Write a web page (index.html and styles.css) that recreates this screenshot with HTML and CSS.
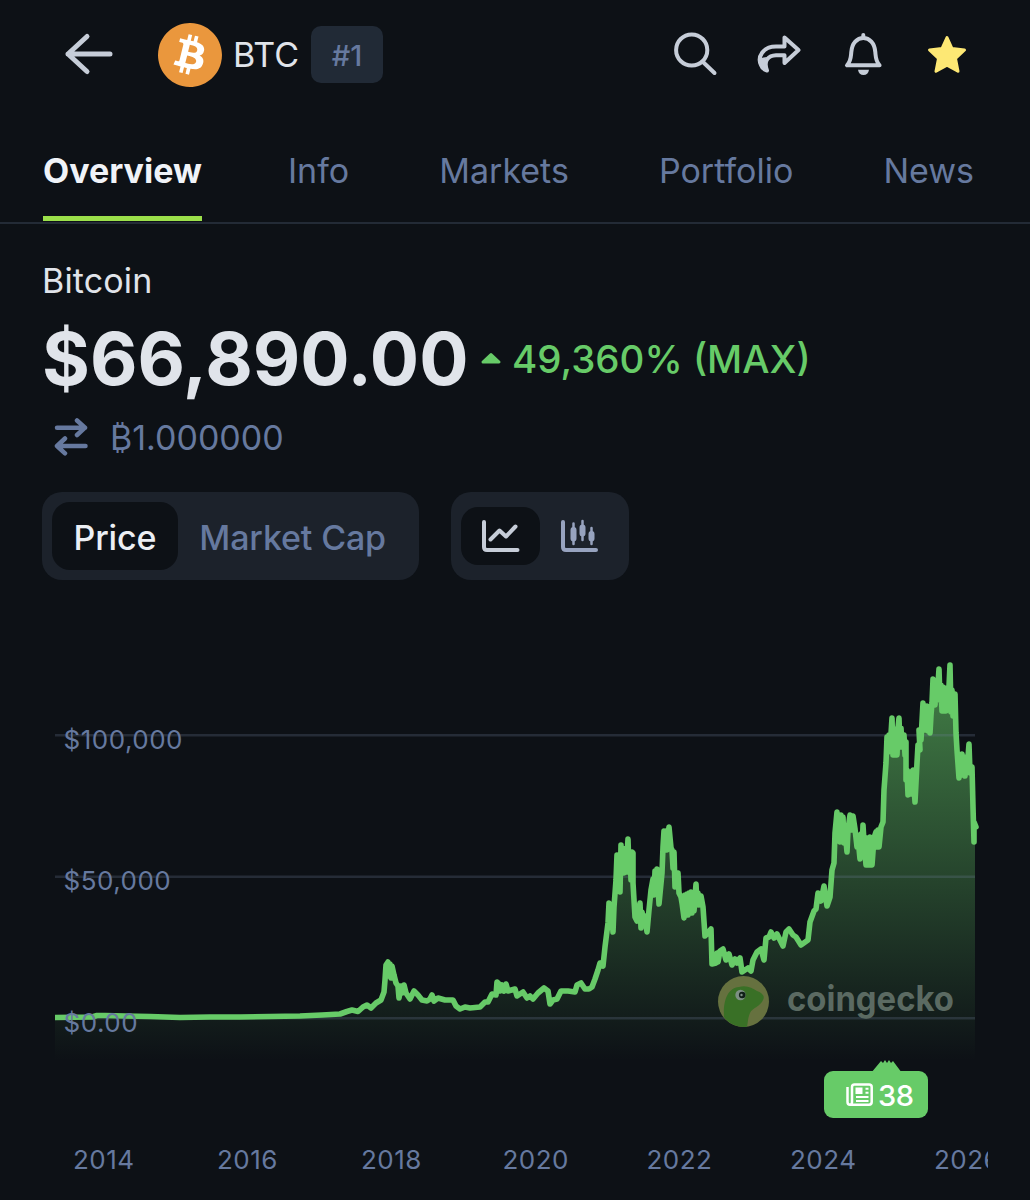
FILE: index.html
```html
<!DOCTYPE html>
<html lang="en">
<head>
	<meta charset="utf-8">
	<title>BTC</title>
	<link rel="stylesheet" href="styles.css">
</head>
<body>
	<header class="header">
		<svg class="back" width="50" height="44" viewBox="64 32 50 44">
			<path d="M110 54H68M87 36.5L68 54L87 71.5"/>
		</svg>
		<svg class="coin" width="64" height="64" viewBox="0 0 24 24">
			<circle cx="12" cy="12" r="11.5" fill="#fff"/>
			<path fill="#ea973d" d="M23.638 14.904c-1.602 6.43-8.113 10.34-14.542 8.736C2.67 22.05-1.244 15.525.362 9.105 1.962 2.67 8.475-1.243 14.9.358c6.43 1.605 10.342 8.115 8.738 14.548v-.002zm-6.35-4.613c.24-1.59-.974-2.45-2.64-3.03l.54-2.153-1.315-.33-.525 2.107c-.345-.087-.705-.167-1.064-.25l.526-2.127-1.32-.33-.54 2.165c-.285-.067-.565-.132-.84-.2l-1.815-.45-.35 1.407s.975.225.955.236c.535.136.63.486.615.766l-1.477 5.92c-.075.166-.24.406-.614.314.015.02-.96-.24-.96-.24l-.66 1.51 1.71.426.93.242-.54 2.19 1.32.327.54-2.17c.36.1.705.19 1.05.273l-.51 2.154 1.32.33.545-2.19c2.24.427 3.93.257 4.64-1.774.57-1.637-.03-2.58-1.217-3.196.854-.193 1.5-.76 1.68-1.93h.01zm-3.01 4.22c-.404 1.64-3.157.75-4.05.53l.72-2.9c.896.23 3.757.67 3.33 2.37zm.41-4.24c-.37 1.49-2.662.735-3.405.55l.654-2.64c.744.18 3.137.524 2.75 2.084v.006z"/>
		</svg>
		<span class="symbol">BTC</span>
		<span class="rank">#1</span>
		<div class="actions">
			<svg width="46" height="46" viewBox="672 31 46 46">
				<circle cx="691.7" cy="50" r="15.6"/>
				<path d="M703 62L714.5 73"/>
			</svg>
			<svg width="46" height="46" viewBox="756 31 46 46">
				<path d="M784.5 46.5H776C763 46.5 757 57 761 65C762 68 765 70 767 70.5C763 60 769 55.5 776 55.2H784.5V63L798.5 50L784.5 37.5Z"/>
				<path class="solid" d="M761 58C759 65 762 70 767 70.5C764 65 764 60 767 57Z"/>
			</svg>
			<svg width="46" height="46" viewBox="840 31 46 46">
				<path d="M863.3 35V38M847 65.3H879.6C875.5 61 875.8 57 875.3 52C874.6 43 869.5 38 863.3 38S852 43 851.3 52C850.8 57 851.1 61 847 65.3Z"/>
				<path class="solid" d="M858 69.7H869C868.5 73 866.5 75 863.5 75S858.5 73 858 69.7Z"/>
			</svg>
			<svg class="star" width="46" height="46" viewBox="924 31 46 46">
				<path d="M947 37.5L952 48.5L964.5 50L955.5 58.5L958 71.3L947 65.3L936 71.3L938.5 58.5L929.5 50L942 48.5Z"/>
			</svg>
		</div>
	</header>

	<nav class="tabs">
		<a class="tab active">Overview</a>
		<a class="tab">Info</a>
		<a class="tab">Markets</a>
		<a class="tab">Portfolio</a>
		<a class="tab">News</a>
	</nav>

	<section class="summary">
		<div class="name">Bitcoin</div>
		<div class="priceRow">
			<span class="price">$66,890.00</span>
			<svg class="up" width="22" height="14" viewBox="0 0 22 14"><path d="M3 11L11 3.5L19 11Z"/></svg>
			<span class="change">49,360% (MAX)</span>
		</div>
		<div class="convert">
			<svg width="36" height="38" viewBox="53 418 36 38">
				<path d="M57 427.7H85M77 420.5L85 427.7L77 435M85.5 446H57M65 438.5L57 446L65 453.3"/>
			</svg>
			<span class="amount">₿1.000000</span>
		</div>
	</section>

	<div class="controls">
		<div class="group">
			<span class="option selected">Price</span>
			<span class="option">Market Cap</span>
		</div>
		<div class="group icons">
			<span class="iconOption selected">
				<svg width="40" height="36" viewBox="481 518 40 36">
					<path d="M484 522V547Q484 550 487 550H517.5M490.5 539.5L499.5 530.5L506 536.5L515.5 526.5"/>
				</svg>
			</span>
			<span class="iconOption">
				<svg width="40" height="36" viewBox="560 518 40 36">
					<path d="M563 522V547Q563 550 566 550H596"/>
					<path class="wick" d="M573.5 523.5V544M582.5 521V540M591.5 528V544"/>
					<path class="candle" d="M573.5 530V538.5M582.5 527.5V533.5M591.5 534V538.5"/>
				</svg>
			</span>
		</div>
	</div>

	<svg class="chart" width="1030" height="600" viewBox="0 600 1030 600">
		<defs>
			<linearGradient id="fade" gradientUnits="userSpaceOnUse" x1="0" y1="664" x2="0" y2="1060">
				<stop offset="0" stop-color="#67cb68" stop-opacity=".6"/>
				<stop offset="1" stop-color="#67cb68" stop-opacity="0"/>
			</linearGradient>
			<clipPath id="plot"><rect x="55" y="600" width="920" height="470"/></clipPath>
			<clipPath id="linePlot"><rect x="55" y="600" width="930" height="470"/></clipPath>
			<clipPath id="axis"><rect x="0" y="1130" width="988" height="60"/></clipPath>
		</defs>

		<polygon id="area" fill="url(#fade)" clip-path="url(#plot)"/>
		<path class="grid" d="M55 735.3H975M55 876.7H975M55 1018.2H975"/>
		<polyline id="line" class="line" clip-path="url(#linePlot)" points="55,1017.5 92,1017 97,1015.5 105,1015.5 125,1016 150,1016.5 180,1017.5 210,1017 240,1017 270,1016.5 300,1016 322,1015 340,1014 347,1011.5 352,1010 358,1011.5 363,1007 367,1005 371,1008 376,1003 381,1000 384,992 385,980 386,965 388,962 389,976 390,964 391,978 392,966 394,975 396,983 398,986 399,998 401,986 402,993 404,985 406,993 410,999 414,991 418,995 422,1000 427,1001 430,999 432,995 434,1001 438,998 445,1000 453,1000 456,1006 460,1009 465,1007 470,1008 480,1007 485,1002 488,1002 492,994 496,995 497,982 499,984 500,991 502,985 504,991 506,984 508,991 515,989 517,996 523,992 527,998 530,996 533,999 538,993 544,988 548,991 550,1004 553,1000 557,999 561,991 568,991 575,992 577,985 581,983 585,989 589,989 592,987 595,979 598,970 600,963 603,966 605,947 608,923 609,903 611,928 611.5,908 613,932 614,907 616,880 617,855 618,885 619,856 620,892 621,845 622,873 623,848 624,873 625,850 626,872 628,839 629,870 630,852 631,880 632,852 633,853 633,883 635,917 637,921 640,903 641,928 642,912 644,924 645,916 647,932 649,910 651,890 653,879 654,895 655,871 656,890 657,869 659,904 662,873 663,847 664,831 665,850 666,831 667,850 669,827 671,848 672,850 673,868 674,852 675,887 678,873 679,893 681,897 682,903 684,918 685,895 686,913 687,894 688,915 689,893 690,912 691,892 692,913 693,893 694,911 696,884 697,905 698,893 699,905 701,896 703,907 705,936 711,929 712,964 716,963 717,953 718,962 720,951 723,949 726,960 729,954 732,965 735,959 737,963 740,958 742,972 748,968 751,971 753,960 757,952 761,949 764,960 766,938 769,937 771,932 774,938 777,934 783,946 786,932 789,929 793,935 796,937 801,945 808,940 810,922 814,911 816,909 818,893 821,901 824,886 827,906 830,897 832,870 834,863 835,833 837,812 838,840 839,816 840,842 841,815 842,836 843,817 844,843 845,829 847,852 848,830 850,815 851,830 853,816 855,829 857,847 858,838 860,859 861,834 862,855 863,825 864,842 866,865 867,838 869,865 870,837 872,865 874,838 876,832 877,847 878,830 879,847 881,827 883,822 884,790 886,763 887,737 888,752 889,735 890,750 892,718 893,755 894,730 895,755 896,729 897,755 898,728 899,718 900,746 901,728 902,747 904,735 905,755 906,742 906,780 907,770 908,795 910,772 911,794 913,770 915,802 917,763 918,745 920,750 919,730 921,740 923,703 924,730 925,706 926,730 927,706 928,731 929,708 930,733 931,715 932,703 933,679 935,705 936,682 937,700 939,669 940,700 941,685 942,711 943,687 944,711 945,689 946,711 947,688 948,708 950,665 951,712 952,690 953,716 955,694 956,733 957,750 959,778 960,755 961,775 962,754 963,775 964,757 965,776 966,757 967,770 969,744 970,773 972,767 973,807 974,842 974,822 976,827"/>

		<g class="axisText">
			<text x="63.5" y="748.5">$100,000</text>
			<text x="63.5" y="890">$50,000</text>
			<text x="63.5" y="1031.5">$0.00</text>
		</g>
		<g class="axisText" clip-path="url(#axis)">
			<text x="73" y="1169">2014</text>
			<text x="217" y="1169">2016</text>
			<text x="361" y="1169">2018</text>
			<text x="502.5" y="1169">2020</text>
			<text x="646.5" y="1169">2022</text>
			<text x="790" y="1169">2024</text>
			<text x="934" y="1169">2026</text>
		</g>

		<!-- watermark -->
		<circle cx="743.5" cy="1001.5" r="25.5" fill="#66713f"/>
		<path fill="#397026" d="M724 1017C723 1002 727 988 739 987C747 985 752 988 757 991C763 993 765 997 763 1000C761 1006 752 1008 750 1013C748 1017 748 1022 747 1026.7C737 1028 728 1023 724 1017Z"/>
		<circle cx="740.5" cy="995" r="5.2" fill="#7c8f84"/>
		<circle cx="742.2" cy="995" r="3.3" fill="#102018"/>
		<circle cx="741.5" cy="995" r="1.2" fill="#7c8f84"/>
		<text class="brand" x="787" y="1010.5" textLength="167" lengthAdjust="spacingAndGlyphs">coingecko</text>

		<!-- news marker -->
		<path fill="#67cb68" d="M871 1073L881 1061L883 1063L885 1060L887 1063L889 1060L891 1063L893 1061L902 1073Z"/>
		<rect x="824" y="1071" width="104" height="47" rx="9" fill="#67cb68"/>
		<g class="news">
			<path d="M852 1087Q852 1084.5 854.5 1084.5H869Q871.7 1084.5 871.7 1087V1102Q871.7 1104.7 869 1104.7H850Q847.5 1104.7 847.5 1102V1087M852 1087V1102Q852 1104.7 850 1104.7"/>
			<path class="thin" d="M865.5 1088.7H868.5M865.5 1092.7H868.5M856 1097H868.5M856 1101H868.5"/>
			<rect x="855.5" y="1087.5" width="7" height="6.5"/>
		</g>
		<text class="count" x="878" y="1106">38</text>
	</svg>

	<script>
		var puntos = document.getElementById("line").getAttribute("points");
		document.getElementById("area").setAttribute("points", "55,1062 " + puntos + " 976,1062");
	</script>
</body>
</html>
```
FILE: styles.css
```css
body
{
	margin: 0;
	width: 1030px;
	height: 1200px;
	overflow: hidden;
	background-color: #0d1116;
	color: #e0e4ea;
	font-family: Inter, "Liberation Sans", sans-serif;
	font-size: 34px;
}
svg
{
	display: block;
	flex: none;
}
.header
{
	display: flex;
	align-items: center;
	height: 108px;
	padding: 0 60px 0 64px;
	box-sizing: border-box;
}
.back
{
	fill: none;
	stroke: #c6cdd8;
	stroke-width: 5;
	stroke-linecap: round;
	stroke-linejoin: round;
}
.coin
{
	margin-top: 1px;
	margin-left: 44px;
}
.symbol
{
	margin-left: 11px;
	padding-top: 2px;
	width: 78px;
	line-height: 42px;
	white-space: nowrap;
}
.rank
{
	width: 72px;
	height: 57px;
	border-radius: 10px;
	background-color: #212a36;
	color: #66799f;
	font-size: 29px;
	font-weight: 500;
	line-height: 59px;
	text-align: center;
}
.actions
{
	display: flex;
	gap: 38px;
	margin-left: auto;
	fill: none;
	stroke: #c6cdd8;
	stroke-width: 4;
	stroke-linecap: round;
	stroke-linejoin: round;
}
.solid
{
	fill: #c6cdd8;
	stroke: none;
}
.star
{
	fill: #fde874;
	stroke: #fde874;
	stroke-width: 3;
}
.tabs
{
	display: flex;
	justify-content: space-between;
	height: 114px;
	padding: 0 56px 0 43px;
	border-bottom: 2.5px solid #232b36;
}
.tab
{
	padding-top: 42px;
	height: 66px;
	line-height: 41px;
	color: #66799f;
}
.active
{
	margin-right: -4px;
	color: #f0f3f8;
	font-weight: 700;
	border-bottom: 5px solid #9be04a;
}
.summary
{
	padding: 36px 0 0 42px;
}
.name
{
	line-height: 41px;
	letter-spacing: .15px;
}
.priceRow
{
	display: flex;
	align-items: center;
	height: 90px;
	margin-top: 12px;
}
.price
{
	width: 426px;
	font-size: 73.2px;
	font-weight: 700;
}
.up
{
	margin-left: 12px;
	fill: #67cb68;
	stroke: #67cb68;
	stroke-width: 3;
	stroke-linejoin: round;
}
.change
{
	margin-left: 10px;
	padding-top: 2px;
	color: #67cb68;
	font-size: 38.5px;
	font-weight: 500;
}
.convert
{
	display: flex;
	align-items: center;
	height: 40px;
	margin-top: 14px;
	padding-left: 11px;
	color: #66799f;
}
.convert svg
{
	fill: none;
	stroke: #66799f;
	stroke-width: 4.5;
	stroke-linecap: round;
	stroke-linejoin: round;
}
.amount
{
	margin-left: 21px;
}
.controls
{
	display: flex;
	gap: 32px;
	padding: 35px 0 0 42px;
}
.group
{
	display: flex;
	align-items: center;
	width: 377px;
	height: 88px;
	padding: 0 10px;
	box-sizing: border-box;
	border-radius: 20px;
	background-color: #1c222b;
}
.icons
{
	width: 178px;
}
.option
{
	height: 68px;
	padding: 0 21.5px;
	border-radius: 18px;
	line-height: 72px;
	font-weight: 500;
	letter-spacing: -.15px;
	white-space: nowrap;
	color: #66799f;
}
.iconOption
{
	display: flex;
	align-items: center;
	justify-content: center;
	width: 79px;
	height: 58px;
	border-radius: 17px;
	fill: none;
	stroke: #97a3bf;
	stroke-width: 4;
	stroke-linecap: round;
	stroke-linejoin: round;
}
.selected
{
	background-color: #0d1116;
	color: #eceff4;
	stroke: #c6cdd8;
}
.wick
{
	stroke-width: 2.5;
}
.candle
{
	stroke-width: 6;
}
.chart
{
	margin-top: 20px;
}
.grid
{
	stroke: #707f9c;
	stroke-opacity: .25;
	stroke-width: 2.5;
}
.line
{
	fill: none;
	stroke: #67cb68;
	stroke-width: 5.6;
	stroke-linecap: round;
	stroke-linejoin: round;
}
.axisText
{
	fill: #66799f;
	font-size: 26px;
	letter-spacing: .5px;
}
.brand
{
	fill: #5b6a62;
	font-size: 35px;
	font-weight: 700;
}
.news
{
	fill: none;
	stroke: #fff;
	stroke-width: 2.5;
}
.news rect
{
	fill: #fff;
	stroke: none;
}
.thin
{
	stroke-width: 2;
}
.count
{
	fill: #fff;
	font-size: 29px;
	font-weight: 500;
	letter-spacing: -.5px;
}
```
